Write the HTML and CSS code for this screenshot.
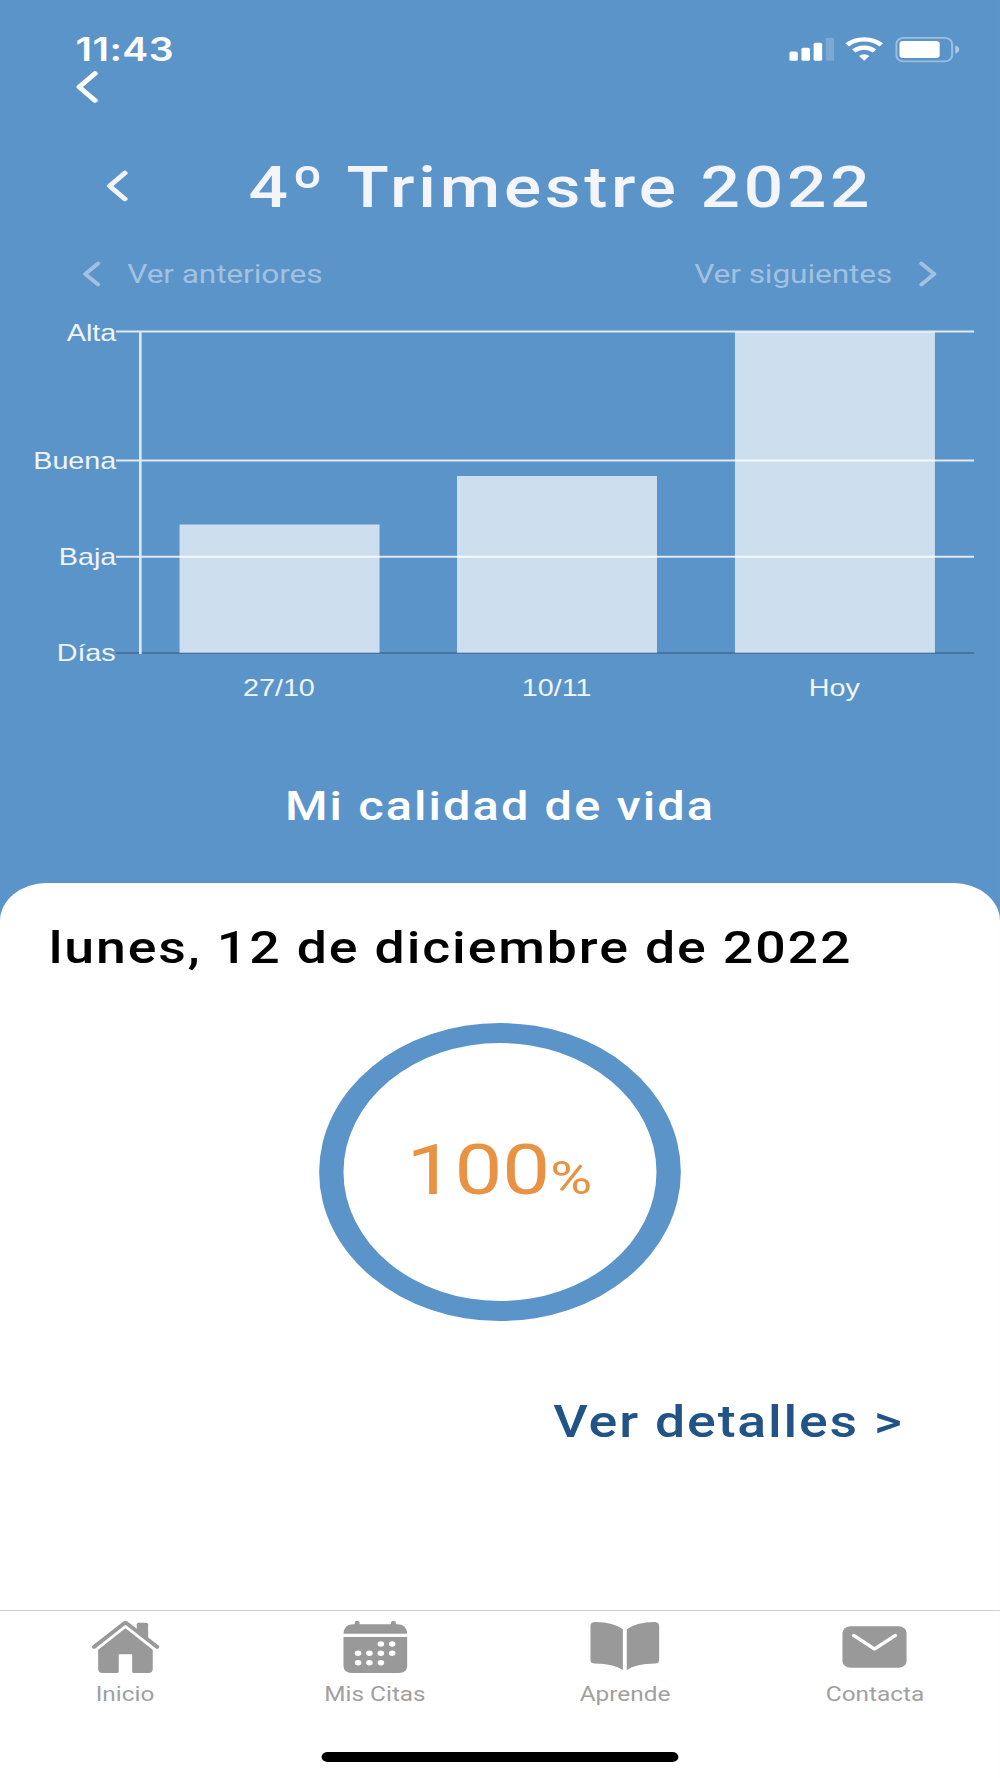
FILE: index.html
```
<!DOCTYPE html>
<html lang="es">
<head>
  <meta charset="UTF-8" />
  <meta name="viewport" content="width=device-width, initial-scale=1.0"/>
  <title>Mi calidad de vida</title>
  <link rel="stylesheet" href="styles.css">
</head>
<body>

  <div class="screen">

    <header class="status-bar">
      <span class="time">11:43</span>
      <div class="status-icons">
        <svg width="37" height="24" viewBox="0 0 37 24" fill="#fff">
          <rect x="0" y="14.5" width="7" height="9.2" rx="1.5"/>
          <rect x="10" y="10.7" width="7" height="13" rx="1.5"/>
          <rect x="20" y="5.7" width="7" height="18" rx="1.5"/>
          <rect x="30" y="0.7" width="7" height="23" rx="1.5" opacity="0.2"/>
        </svg>
        <svg width="31" height="24" viewBox="0 0 31 24" fill="none" stroke="#fff" stroke-width="4.2">
          <path d="M1.5 7.9 A20.5 20.5 0 0 1 29.5 7.9"/>
          <path d="M7 14 A12.6 12.6 0 0 1 24 14"/>
          <path d="M15.5 23.7 L11.3 19 A6.2 6.2 0 0 1 19.7 19 Z" fill="#fff" stroke="none"/>
        </svg>
        <svg width="53" height="26" viewBox="0 0 53 26">
          <rect x="0.9" y="0.9" width="45.8" height="23.4" rx="6" fill="none" stroke="#fff" stroke-opacity="0.4" stroke-width="1.7"/>
          <rect x="3.5" y="4" width="33" height="17" rx="3" fill="#fff"/>
          <path d="M49.3 8.5 Q52.6 10 52.6 12.6 Q52.6 15.2 49.3 16.8 Z" fill="#fff" fill-opacity="0.5"/>
        </svg>
      </div>
    </header>

    <div class="back">
      <svg width="20" height="34" viewBox="0 0 20 34"><path d="M16 3.5 L3 17 L16 30.5"/></svg>
    </div>

    <div class="title-row">
      <svg width="20" height="34" viewBox="0 0 20 34"><path d="M15.5 4 L3 17 L15.5 30"/></svg>
      <h1>4º Trimestre 2022</h1>
    </div>

    <div class="pager">
      <a class="pager-link">
        <svg width="16" height="28" viewBox="0 0 16 28"><path d="M13.5 3.5 L3 14 L13.5 24.5"/></svg>
        <span>Ver anteriores</span>
      </a>
      <a class="pager-link">
        <span>Ver siguientes</span>
        <svg width="16" height="28" viewBox="0 0 16 28"><path d="M2.5 3.5 L13 14 L2.5 24.5"/></svg>
      </a>
    </div>

    <svg class="chart" width="821" height="400" viewBox="0 0 821 400">
      <path class="baseline" d="M95.2 342.9 H799.7"/>
      <g class="bars">
        <rect x="147.4" y="214.5" width="164.2" height="128.2"/>
        <rect x="375.2" y="166" width="164.2" height="176.7"/>
        <rect x="603.4" y="22" width="164.2" height="320.7"/>
      </g>
      <g class="grid">
        <path d="M95.2 21.6 H799.7"/>
        <path d="M95.2 150.5 H799.7"/>
        <path d="M95.2 246.8 H799.7"/>
      </g>
      <path class="axis" d="M115.2 21 V344"/>
      <g class="y-labels">
        <text x="95.5" y="31">Alta</text>
        <text x="95.5" y="159">Buena</text>
        <text x="95.5" y="255">Baja</text>
        <text x="95" y="351">Días</text>
      </g>
      <g class="x-labels">
        <text x="229" y="386">27/10</text>
        <text x="457" y="386">10/11</text>
        <text x="685" y="386">Hoy</text>
      </g>
    </svg>

    <h2>Mi calidad de vida</h2>

    <main class="sheet">
      <p class="date">lunes, 12 de diciembre de 2022</p>
      <div class="ring">
        <span class="score">100</span><span class="percent">%</span>
      </div>
      <a class="details">Ver detalles &gt;</a>
    </main>

    <nav class="tabs">
      <a class="tab">
        <svg width="60" height="56" viewBox="0 0 60 56">
          <path d="M39.3 6.2 Q39.3 4.7 40.8 4.7 H47.1 Q48.6 4.7 48.6 6.2 V22 L39.3 13 Z"/>
          <path class="roof" d="M4.3 28.9 L28.5 5.7 Q30 4.3 31.5 5.7 L56 28.9"/>
          <path d="M30 10.3 L52.4 31.8 V51 Q52.4 55 48.8 55 H37 Q35.5 55 35.5 53.5 V36.3 H24.5 V53.5 Q24.5 55 23 55 H11.2 Q7.6 55 7.6 51 V31.8 Z"/>
        </svg>
        <span>Inicio</span>
      </a>
      <a class="tab">
        <svg width="60" height="56" viewBox="0 0 60 56">
          <path d="M4 15.7 Q4.5 6.3 12 6.3 H13.2 V4.7 A2 2 0 0 1 17.2 4.7 V6.3 H43 V4.7 A2 2 0 0 1 47 4.7 V6.3 H48.3 Q55.8 6.3 56.3 15.7 Z"/>
          <path d="M4 19 H56.3 V48 Q56.3 55 49.3 55 H11 Q4 55 4 48 Z"/>
          <g fill="#fff">
            <circle cx="34.7" cy="26" r="2.7"/>
            <circle cx="44" cy="26" r="2.7"/>
            <circle cx="16" cy="35.3" r="2.7"/>
            <circle cx="25.3" cy="35.3" r="2.7"/>
            <circle cx="34.7" cy="35.3" r="2.7"/>
            <circle cx="44" cy="35.3" r="2.7"/>
            <circle cx="16" cy="44.7" r="2.7"/>
            <circle cx="25.3" cy="44.7" r="2.7"/>
            <circle cx="34.7" cy="44.7" r="2.7"/>
          </g>
        </svg>
        <span>Mis Citas</span>
      </a>
      <a class="tab">
        <svg width="60" height="56" viewBox="0 0 60 56">
          <path d="M1.8 8 Q1.8 4 5.8 4 Q21 4.3 28.4 11.3 V52 Q21 45.8 5.3 45.6 Q1.8 45.6 1.8 42 Z"/>
          <path d="M58.2 8 Q58.2 4 54.2 4 Q39 4.3 31.6 11.3 V52 Q39 45.8 54.7 45.6 Q58.2 45.6 58.2 42 Z"/>
        </svg>
        <span>Aprende</span>
      </a>
      <a class="tab">
        <svg width="60" height="56" viewBox="0 0 60 56">
          <rect x="3.7" y="8.3" width="52.6" height="41.4" rx="6.5"/>
          <path class="flap" d="M13 17.5 L30 31 L47 17.5"/>
        </svg>
        <span>Contacta</span>
      </a>
    </nav>

    <footer class="home-area">
      <div class="home-indicator"></div>
    </footer>

  </div>

</body>
</html>
```
FILE: styles.css
```
body {
  margin: 0;
  overflow: hidden;
  background: #fff;
  font-family: Roboto, sans-serif;
}

.screen {
  display: flex;
  flex-direction: column;
  width: 821px;
  height: 1778px;
  background: #5b94c9;
  transform: scaleX(1.218);
  transform-origin: 0 0;
}

h1, h2, p {
  margin: 0;
}

.status-bar {
  display: flex;
  justify-content: space-between;
  box-sizing: border-box;
  height: 68px;
  padding: 30px 33.5px 0 62px;
}

.time {
  font-family: Inter, sans-serif;
  font-size: 32px;
  font-weight: 600;
  line-height: 39px;
  letter-spacing: 0.4px;
  color: #fff;
}

.status-icons {
  display: flex;
  gap: 9.5px;
  padding-top: 7px;
}

.back, .title-row, .pager-link {
  fill: none;
  stroke-width: 4.5;
  stroke-linecap: round;
  stroke-linejoin: round;
}

.back {
  height: 82px;
  padding: 2px 0 0 61.5px;
  stroke: #fff;
}

.title-row {
  display: flex;
  align-items: center;
  height: 68px;
  padding-left: 87px;
  stroke: #f4f5fa;
}

h1 {
  margin-left: 97px;
  padding-top: 3px;
  font-size: 57px;
  font-weight: 500;
  line-height: 68px;
  letter-spacing: 3.05px;
  color: #f4f5fa;
  stroke: none;
  white-space: nowrap;
}

.pager {
  display: flex;
  justify-content: space-between;
  height: 36px;
  padding: 36px 51px 0 67px;
}

.pager-link {
  display: flex;
  align-items: center;
  gap: 21.5px;
  height: 36px;
  font-size: 26px;
  letter-spacing: -0.1px;
  color: #a0c1e0;
  stroke: #a0c1e0;
  stroke-width: 3.6;
}

.pager-link span {
  stroke: none;
}

.chart {
  flex: none;
  margin-top: 18px;
  font-family: "Liberation Sans", Arial, sans-serif;
  font-size: 23.6px;
}

.bars {
  fill: #cddfee;
}

.grid {
  stroke: rgba(255, 255, 255, 0.8);
  stroke-width: 2;
}

.baseline {
  stroke: #48749f;
  stroke-width: 2;
}

.axis {
  stroke: #dae8f3;
  stroke-width: 2.2;
}

.y-labels, .x-labels {
  fill: #f0f5fa;
}

.y-labels {
  text-anchor: end;
}

.x-labels {
  text-anchor: middle;
}

h2 {
  height: 100px;
  margin-top: 73px;
  font-size: 40px;
  font-weight: 500;
  line-height: 48px;
  letter-spacing: 1.7px;
  text-align: center;
  color: #fff;
}

.sheet {
  display: flex;
  flex: 1;
  flex-direction: column;
  align-items: center;
  background: #fff;
  border-radius: 38px 38px 0 0;
}

.date {
  align-self: flex-start;
  padding: 39px 0 0 40px;
  font-size: 44px;
  font-weight: 500;
  line-height: 52px;
  letter-spacing: 1.55px;
  color: #000;
}

.ring {
  display: flex;
  align-items: baseline;
  justify-content: center;
  box-sizing: border-box;
  width: 297px;
  height: 298px;
  margin: 49px 1px 0 0;
  padding-top: 86px;
  border: 20px solid #5b94c9;
  border-radius: 50%;
  line-height: 82px;
  color: #e89244;
}

.score {
  font-size: 70px;
}

.percent {
  font-size: 47px;
}

.details {
  align-self: flex-end;
  margin: 75px 79px 0 0;
  font-size: 44px;
  font-weight: 500;
  line-height: 52px;
  letter-spacing: 1.5px;
  color: #215387;
}

.tabs {
  display: grid;
  grid-template-columns: repeat(4, 1fr);
  box-sizing: border-box;
  height: 142px;
  padding-top: 7px;
  border-top: 1px solid #d0d0d0;
  background: #fff;
}

.tab {
  display: flex;
  flex-direction: column;
  align-items: center;
  gap: 8px;
  font-size: 20px;
  line-height: 24px;
  color: #a0a0a0;
  fill: #999;
}

.roof {
  fill: none;
  stroke: #999;
  stroke-width: 3.6;
  stroke-linecap: round;
}

.flap {
  fill: none;
  stroke: #fff;
  stroke-width: 3.2;
  stroke-linecap: round;
  stroke-linejoin: round;
}

.home-area {
  height: 26px;
  background: #fff;
}

.home-indicator {
  width: 293px;
  height: 10px;
  margin: 0 auto;
  border-radius: 5px;
  background: #000;
}
```
